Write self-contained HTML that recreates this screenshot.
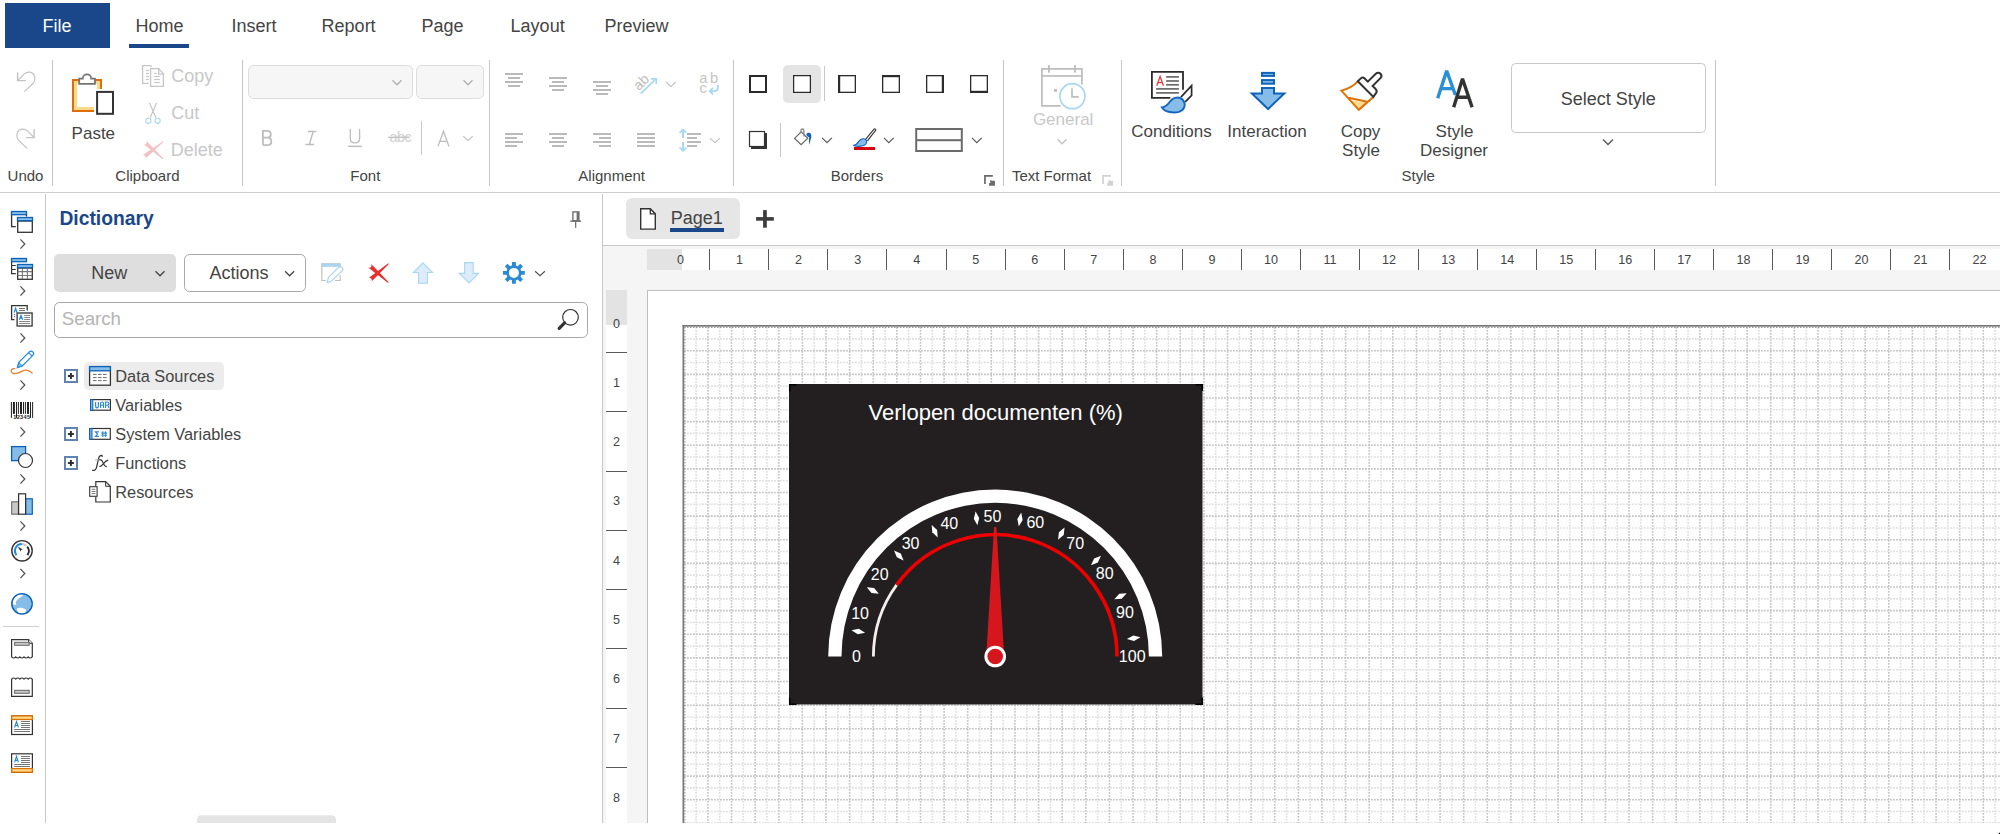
<!DOCTYPE html>
<html><head><meta charset="utf-8"><title>Report Designer</title>
<style>
html,body{margin:0;padding:0;background:#ffffff;width:2000px;height:834px;overflow:hidden}
svg{position:absolute;left:0;top:0;display:block}
svg{font-family:"Liberation Sans", sans-serif} text{white-space:pre}
</style></head><body>
<svg width="2000" height="834" viewBox="0 0 2000 834">
<rect x="603" y="246" width="1397" height="577" fill="#f5f5f5" rx="0" />
<rect x="647" y="249" width="1353" height="21" fill="#ffffff" rx="0" />
<rect x="647" y="249" width="35" height="21" fill="#e3e3e3" rx="0" />
<rect x="606" y="290" width="21" height="533" fill="#ffffff" rx="0" />
<rect x="606" y="290" width="21" height="35" fill="#e3e3e3" rx="0" />
<rect x="647" y="290" width="1353" height="533" fill="#ffffff" rx="0" />
<rect x="647" y="290" width="1353" height="1" fill="#bdbdbd" rx="0" />
<rect x="647" y="290" width="1" height="533" fill="#bdbdbd" rx="0" />
<g><line x1="696.11" y1="327" x2="696.11" y2="823" stroke="#dfdfdf" stroke-width="1.6" stroke-dasharray="1.8 1.2"/><line x1="707.92" y1="327" x2="707.92" y2="823" stroke="#c4c4c4" stroke-width="1.6" stroke-dasharray="1.8 1.2"/><line x1="719.73" y1="327" x2="719.73" y2="823" stroke="#dfdfdf" stroke-width="1.6" stroke-dasharray="1.8 1.2"/><line x1="731.54" y1="327" x2="731.54" y2="823" stroke="#c4c4c4" stroke-width="1.6" stroke-dasharray="1.8 1.2"/><line x1="743.34" y1="327" x2="743.34" y2="823" stroke="#dfdfdf" stroke-width="1.6" stroke-dasharray="1.8 1.2"/><line x1="755.15" y1="327" x2="755.15" y2="823" stroke="#c4c4c4" stroke-width="1.6" stroke-dasharray="1.8 1.2"/><line x1="766.96" y1="327" x2="766.96" y2="823" stroke="#dfdfdf" stroke-width="1.6" stroke-dasharray="1.8 1.2"/><line x1="778.77" y1="327" x2="778.77" y2="823" stroke="#c4c4c4" stroke-width="1.6" stroke-dasharray="1.8 1.2"/><line x1="790.58" y1="327" x2="790.58" y2="823" stroke="#dfdfdf" stroke-width="1.6" stroke-dasharray="1.8 1.2"/><line x1="802.39" y1="327" x2="802.39" y2="823" stroke="#c4c4c4" stroke-width="1.6" stroke-dasharray="1.8 1.2"/><line x1="814.20" y1="327" x2="814.20" y2="823" stroke="#dfdfdf" stroke-width="1.6" stroke-dasharray="1.8 1.2"/><line x1="826.01" y1="327" x2="826.01" y2="823" stroke="#c4c4c4" stroke-width="1.6" stroke-dasharray="1.8 1.2"/><line x1="837.82" y1="327" x2="837.82" y2="823" stroke="#dfdfdf" stroke-width="1.6" stroke-dasharray="1.8 1.2"/><line x1="849.63" y1="327" x2="849.63" y2="823" stroke="#c4c4c4" stroke-width="1.6" stroke-dasharray="1.8 1.2"/><line x1="861.43" y1="327" x2="861.43" y2="823" stroke="#dfdfdf" stroke-width="1.6" stroke-dasharray="1.8 1.2"/><line x1="873.24" y1="327" x2="873.24" y2="823" stroke="#c4c4c4" stroke-width="1.6" stroke-dasharray="1.8 1.2"/><line x1="885.05" y1="327" x2="885.05" y2="823" stroke="#dfdfdf" stroke-width="1.6" stroke-dasharray="1.8 1.2"/><line x1="896.86" y1="327" x2="896.86" y2="823" stroke="#c4c4c4" stroke-width="1.6" stroke-dasharray="1.8 1.2"/><line x1="908.67" y1="327" x2="908.67" y2="823" stroke="#dfdfdf" stroke-width="1.6" stroke-dasharray="1.8 1.2"/><line x1="920.48" y1="327" x2="920.48" y2="823" stroke="#c4c4c4" stroke-width="1.6" stroke-dasharray="1.8 1.2"/><line x1="932.29" y1="327" x2="932.29" y2="823" stroke="#dfdfdf" stroke-width="1.6" stroke-dasharray="1.8 1.2"/><line x1="944.10" y1="327" x2="944.10" y2="823" stroke="#c4c4c4" stroke-width="1.6" stroke-dasharray="1.8 1.2"/><line x1="955.91" y1="327" x2="955.91" y2="823" stroke="#dfdfdf" stroke-width="1.6" stroke-dasharray="1.8 1.2"/><line x1="967.72" y1="327" x2="967.72" y2="823" stroke="#c4c4c4" stroke-width="1.6" stroke-dasharray="1.8 1.2"/><line x1="979.52" y1="327" x2="979.52" y2="823" stroke="#dfdfdf" stroke-width="1.6" stroke-dasharray="1.8 1.2"/><line x1="991.33" y1="327" x2="991.33" y2="823" stroke="#c4c4c4" stroke-width="1.6" stroke-dasharray="1.8 1.2"/><line x1="1003.14" y1="327" x2="1003.14" y2="823" stroke="#dfdfdf" stroke-width="1.6" stroke-dasharray="1.8 1.2"/><line x1="1014.95" y1="327" x2="1014.95" y2="823" stroke="#c4c4c4" stroke-width="1.6" stroke-dasharray="1.8 1.2"/><line x1="1026.76" y1="327" x2="1026.76" y2="823" stroke="#dfdfdf" stroke-width="1.6" stroke-dasharray="1.8 1.2"/><line x1="1038.57" y1="327" x2="1038.57" y2="823" stroke="#c4c4c4" stroke-width="1.6" stroke-dasharray="1.8 1.2"/><line x1="1050.38" y1="327" x2="1050.38" y2="823" stroke="#dfdfdf" stroke-width="1.6" stroke-dasharray="1.8 1.2"/><line x1="1062.19" y1="327" x2="1062.19" y2="823" stroke="#c4c4c4" stroke-width="1.6" stroke-dasharray="1.8 1.2"/><line x1="1074.00" y1="327" x2="1074.00" y2="823" stroke="#dfdfdf" stroke-width="1.6" stroke-dasharray="1.8 1.2"/><line x1="1085.81" y1="327" x2="1085.81" y2="823" stroke="#c4c4c4" stroke-width="1.6" stroke-dasharray="1.8 1.2"/><line x1="1097.62" y1="327" x2="1097.62" y2="823" stroke="#dfdfdf" stroke-width="1.6" stroke-dasharray="1.8 1.2"/><line x1="1109.42" y1="327" x2="1109.42" y2="823" stroke="#c4c4c4" stroke-width="1.6" stroke-dasharray="1.8 1.2"/><line x1="1121.23" y1="327" x2="1121.23" y2="823" stroke="#dfdfdf" stroke-width="1.6" stroke-dasharray="1.8 1.2"/><line x1="1133.04" y1="327" x2="1133.04" y2="823" stroke="#c4c4c4" stroke-width="1.6" stroke-dasharray="1.8 1.2"/><line x1="1144.85" y1="327" x2="1144.85" y2="823" stroke="#dfdfdf" stroke-width="1.6" stroke-dasharray="1.8 1.2"/><line x1="1156.66" y1="327" x2="1156.66" y2="823" stroke="#c4c4c4" stroke-width="1.6" stroke-dasharray="1.8 1.2"/><line x1="1168.47" y1="327" x2="1168.47" y2="823" stroke="#dfdfdf" stroke-width="1.6" stroke-dasharray="1.8 1.2"/><line x1="1180.28" y1="327" x2="1180.28" y2="823" stroke="#c4c4c4" stroke-width="1.6" stroke-dasharray="1.8 1.2"/><line x1="1192.09" y1="327" x2="1192.09" y2="823" stroke="#dfdfdf" stroke-width="1.6" stroke-dasharray="1.8 1.2"/><line x1="1203.90" y1="327" x2="1203.90" y2="823" stroke="#c4c4c4" stroke-width="1.6" stroke-dasharray="1.8 1.2"/><line x1="1215.70" y1="327" x2="1215.70" y2="823" stroke="#dfdfdf" stroke-width="1.6" stroke-dasharray="1.8 1.2"/><line x1="1227.51" y1="327" x2="1227.51" y2="823" stroke="#c4c4c4" stroke-width="1.6" stroke-dasharray="1.8 1.2"/><line x1="1239.32" y1="327" x2="1239.32" y2="823" stroke="#dfdfdf" stroke-width="1.6" stroke-dasharray="1.8 1.2"/><line x1="1251.13" y1="327" x2="1251.13" y2="823" stroke="#c4c4c4" stroke-width="1.6" stroke-dasharray="1.8 1.2"/><line x1="1262.94" y1="327" x2="1262.94" y2="823" stroke="#dfdfdf" stroke-width="1.6" stroke-dasharray="1.8 1.2"/><line x1="1274.75" y1="327" x2="1274.75" y2="823" stroke="#c4c4c4" stroke-width="1.6" stroke-dasharray="1.8 1.2"/><line x1="1286.56" y1="327" x2="1286.56" y2="823" stroke="#dfdfdf" stroke-width="1.6" stroke-dasharray="1.8 1.2"/><line x1="1298.37" y1="327" x2="1298.37" y2="823" stroke="#c4c4c4" stroke-width="1.6" stroke-dasharray="1.8 1.2"/><line x1="1310.18" y1="327" x2="1310.18" y2="823" stroke="#dfdfdf" stroke-width="1.6" stroke-dasharray="1.8 1.2"/><line x1="1321.99" y1="327" x2="1321.99" y2="823" stroke="#c4c4c4" stroke-width="1.6" stroke-dasharray="1.8 1.2"/><line x1="1333.80" y1="327" x2="1333.80" y2="823" stroke="#dfdfdf" stroke-width="1.6" stroke-dasharray="1.8 1.2"/><line x1="1345.60" y1="327" x2="1345.60" y2="823" stroke="#c4c4c4" stroke-width="1.6" stroke-dasharray="1.8 1.2"/><line x1="1357.41" y1="327" x2="1357.41" y2="823" stroke="#dfdfdf" stroke-width="1.6" stroke-dasharray="1.8 1.2"/><line x1="1369.22" y1="327" x2="1369.22" y2="823" stroke="#c4c4c4" stroke-width="1.6" stroke-dasharray="1.8 1.2"/><line x1="1381.03" y1="327" x2="1381.03" y2="823" stroke="#dfdfdf" stroke-width="1.6" stroke-dasharray="1.8 1.2"/><line x1="1392.84" y1="327" x2="1392.84" y2="823" stroke="#c4c4c4" stroke-width="1.6" stroke-dasharray="1.8 1.2"/><line x1="1404.65" y1="327" x2="1404.65" y2="823" stroke="#dfdfdf" stroke-width="1.6" stroke-dasharray="1.8 1.2"/><line x1="1416.46" y1="327" x2="1416.46" y2="823" stroke="#c4c4c4" stroke-width="1.6" stroke-dasharray="1.8 1.2"/><line x1="1428.27" y1="327" x2="1428.27" y2="823" stroke="#dfdfdf" stroke-width="1.6" stroke-dasharray="1.8 1.2"/><line x1="1440.08" y1="327" x2="1440.08" y2="823" stroke="#c4c4c4" stroke-width="1.6" stroke-dasharray="1.8 1.2"/><line x1="1451.88" y1="327" x2="1451.88" y2="823" stroke="#dfdfdf" stroke-width="1.6" stroke-dasharray="1.8 1.2"/><line x1="1463.69" y1="327" x2="1463.69" y2="823" stroke="#c4c4c4" stroke-width="1.6" stroke-dasharray="1.8 1.2"/><line x1="1475.50" y1="327" x2="1475.50" y2="823" stroke="#dfdfdf" stroke-width="1.6" stroke-dasharray="1.8 1.2"/><line x1="1487.31" y1="327" x2="1487.31" y2="823" stroke="#c4c4c4" stroke-width="1.6" stroke-dasharray="1.8 1.2"/><line x1="1499.12" y1="327" x2="1499.12" y2="823" stroke="#dfdfdf" stroke-width="1.6" stroke-dasharray="1.8 1.2"/><line x1="1510.93" y1="327" x2="1510.93" y2="823" stroke="#c4c4c4" stroke-width="1.6" stroke-dasharray="1.8 1.2"/><line x1="1522.74" y1="327" x2="1522.74" y2="823" stroke="#dfdfdf" stroke-width="1.6" stroke-dasharray="1.8 1.2"/><line x1="1534.55" y1="327" x2="1534.55" y2="823" stroke="#c4c4c4" stroke-width="1.6" stroke-dasharray="1.8 1.2"/><line x1="1546.36" y1="327" x2="1546.36" y2="823" stroke="#dfdfdf" stroke-width="1.6" stroke-dasharray="1.8 1.2"/><line x1="1558.17" y1="327" x2="1558.17" y2="823" stroke="#c4c4c4" stroke-width="1.6" stroke-dasharray="1.8 1.2"/><line x1="1569.97" y1="327" x2="1569.97" y2="823" stroke="#dfdfdf" stroke-width="1.6" stroke-dasharray="1.8 1.2"/><line x1="1581.78" y1="327" x2="1581.78" y2="823" stroke="#c4c4c4" stroke-width="1.6" stroke-dasharray="1.8 1.2"/><line x1="1593.59" y1="327" x2="1593.59" y2="823" stroke="#dfdfdf" stroke-width="1.6" stroke-dasharray="1.8 1.2"/><line x1="1605.40" y1="327" x2="1605.40" y2="823" stroke="#c4c4c4" stroke-width="1.6" stroke-dasharray="1.8 1.2"/><line x1="1617.21" y1="327" x2="1617.21" y2="823" stroke="#dfdfdf" stroke-width="1.6" stroke-dasharray="1.8 1.2"/><line x1="1629.02" y1="327" x2="1629.02" y2="823" stroke="#c4c4c4" stroke-width="1.6" stroke-dasharray="1.8 1.2"/><line x1="1640.83" y1="327" x2="1640.83" y2="823" stroke="#dfdfdf" stroke-width="1.6" stroke-dasharray="1.8 1.2"/><line x1="1652.64" y1="327" x2="1652.64" y2="823" stroke="#c4c4c4" stroke-width="1.6" stroke-dasharray="1.8 1.2"/><line x1="1664.45" y1="327" x2="1664.45" y2="823" stroke="#dfdfdf" stroke-width="1.6" stroke-dasharray="1.8 1.2"/><line x1="1676.26" y1="327" x2="1676.26" y2="823" stroke="#c4c4c4" stroke-width="1.6" stroke-dasharray="1.8 1.2"/><line x1="1688.07" y1="327" x2="1688.07" y2="823" stroke="#dfdfdf" stroke-width="1.6" stroke-dasharray="1.8 1.2"/><line x1="1699.87" y1="327" x2="1699.87" y2="823" stroke="#c4c4c4" stroke-width="1.6" stroke-dasharray="1.8 1.2"/><line x1="1711.68" y1="327" x2="1711.68" y2="823" stroke="#dfdfdf" stroke-width="1.6" stroke-dasharray="1.8 1.2"/><line x1="1723.49" y1="327" x2="1723.49" y2="823" stroke="#c4c4c4" stroke-width="1.6" stroke-dasharray="1.8 1.2"/><line x1="1735.30" y1="327" x2="1735.30" y2="823" stroke="#dfdfdf" stroke-width="1.6" stroke-dasharray="1.8 1.2"/><line x1="1747.11" y1="327" x2="1747.11" y2="823" stroke="#c4c4c4" stroke-width="1.6" stroke-dasharray="1.8 1.2"/><line x1="1758.92" y1="327" x2="1758.92" y2="823" stroke="#dfdfdf" stroke-width="1.6" stroke-dasharray="1.8 1.2"/><line x1="1770.73" y1="327" x2="1770.73" y2="823" stroke="#c4c4c4" stroke-width="1.6" stroke-dasharray="1.8 1.2"/><line x1="1782.54" y1="327" x2="1782.54" y2="823" stroke="#dfdfdf" stroke-width="1.6" stroke-dasharray="1.8 1.2"/><line x1="1794.35" y1="327" x2="1794.35" y2="823" stroke="#c4c4c4" stroke-width="1.6" stroke-dasharray="1.8 1.2"/><line x1="1806.15" y1="327" x2="1806.15" y2="823" stroke="#dfdfdf" stroke-width="1.6" stroke-dasharray="1.8 1.2"/><line x1="1817.96" y1="327" x2="1817.96" y2="823" stroke="#c4c4c4" stroke-width="1.6" stroke-dasharray="1.8 1.2"/><line x1="1829.77" y1="327" x2="1829.77" y2="823" stroke="#dfdfdf" stroke-width="1.6" stroke-dasharray="1.8 1.2"/><line x1="1841.58" y1="327" x2="1841.58" y2="823" stroke="#c4c4c4" stroke-width="1.6" stroke-dasharray="1.8 1.2"/><line x1="1853.39" y1="327" x2="1853.39" y2="823" stroke="#dfdfdf" stroke-width="1.6" stroke-dasharray="1.8 1.2"/><line x1="1865.20" y1="327" x2="1865.20" y2="823" stroke="#c4c4c4" stroke-width="1.6" stroke-dasharray="1.8 1.2"/><line x1="1877.01" y1="327" x2="1877.01" y2="823" stroke="#dfdfdf" stroke-width="1.6" stroke-dasharray="1.8 1.2"/><line x1="1888.82" y1="327" x2="1888.82" y2="823" stroke="#c4c4c4" stroke-width="1.6" stroke-dasharray="1.8 1.2"/><line x1="1900.63" y1="327" x2="1900.63" y2="823" stroke="#dfdfdf" stroke-width="1.6" stroke-dasharray="1.8 1.2"/><line x1="1912.44" y1="327" x2="1912.44" y2="823" stroke="#c4c4c4" stroke-width="1.6" stroke-dasharray="1.8 1.2"/><line x1="1924.24" y1="327" x2="1924.24" y2="823" stroke="#dfdfdf" stroke-width="1.6" stroke-dasharray="1.8 1.2"/><line x1="1936.05" y1="327" x2="1936.05" y2="823" stroke="#c4c4c4" stroke-width="1.6" stroke-dasharray="1.8 1.2"/><line x1="1947.86" y1="327" x2="1947.86" y2="823" stroke="#dfdfdf" stroke-width="1.6" stroke-dasharray="1.8 1.2"/><line x1="1959.67" y1="327" x2="1959.67" y2="823" stroke="#c4c4c4" stroke-width="1.6" stroke-dasharray="1.8 1.2"/><line x1="1971.48" y1="327" x2="1971.48" y2="823" stroke="#dfdfdf" stroke-width="1.6" stroke-dasharray="1.8 1.2"/><line x1="1983.29" y1="327" x2="1983.29" y2="823" stroke="#c4c4c4" stroke-width="1.6" stroke-dasharray="1.8 1.2"/><line x1="1995.10" y1="327" x2="1995.10" y2="823" stroke="#dfdfdf" stroke-width="1.6" stroke-dasharray="1.8 1.2"/><line x1="684" y1="338.89" x2="2000" y2="338.89" stroke="#dfdfdf" stroke-width="1.6" stroke-dasharray="1.8 1.2"/><line x1="684" y1="350.70" x2="2000" y2="350.70" stroke="#c4c4c4" stroke-width="1.6" stroke-dasharray="1.8 1.2"/><line x1="684" y1="362.52" x2="2000" y2="362.52" stroke="#dfdfdf" stroke-width="1.6" stroke-dasharray="1.8 1.2"/><line x1="684" y1="374.33" x2="2000" y2="374.33" stroke="#c4c4c4" stroke-width="1.6" stroke-dasharray="1.8 1.2"/><line x1="684" y1="386.15" x2="2000" y2="386.15" stroke="#dfdfdf" stroke-width="1.6" stroke-dasharray="1.8 1.2"/><line x1="684" y1="397.97" x2="2000" y2="397.97" stroke="#c4c4c4" stroke-width="1.6" stroke-dasharray="1.8 1.2"/><line x1="684" y1="409.78" x2="2000" y2="409.78" stroke="#dfdfdf" stroke-width="1.6" stroke-dasharray="1.8 1.2"/><line x1="684" y1="421.60" x2="2000" y2="421.60" stroke="#c4c4c4" stroke-width="1.6" stroke-dasharray="1.8 1.2"/><line x1="684" y1="433.41" x2="2000" y2="433.41" stroke="#dfdfdf" stroke-width="1.6" stroke-dasharray="1.8 1.2"/><line x1="684" y1="445.23" x2="2000" y2="445.23" stroke="#c4c4c4" stroke-width="1.6" stroke-dasharray="1.8 1.2"/><line x1="684" y1="457.05" x2="2000" y2="457.05" stroke="#dfdfdf" stroke-width="1.6" stroke-dasharray="1.8 1.2"/><line x1="684" y1="468.86" x2="2000" y2="468.86" stroke="#c4c4c4" stroke-width="1.6" stroke-dasharray="1.8 1.2"/><line x1="684" y1="480.68" x2="2000" y2="480.68" stroke="#dfdfdf" stroke-width="1.6" stroke-dasharray="1.8 1.2"/><line x1="684" y1="492.49" x2="2000" y2="492.49" stroke="#c4c4c4" stroke-width="1.6" stroke-dasharray="1.8 1.2"/><line x1="684" y1="504.31" x2="2000" y2="504.31" stroke="#dfdfdf" stroke-width="1.6" stroke-dasharray="1.8 1.2"/><line x1="684" y1="516.13" x2="2000" y2="516.13" stroke="#c4c4c4" stroke-width="1.6" stroke-dasharray="1.8 1.2"/><line x1="684" y1="527.94" x2="2000" y2="527.94" stroke="#dfdfdf" stroke-width="1.6" stroke-dasharray="1.8 1.2"/><line x1="684" y1="539.76" x2="2000" y2="539.76" stroke="#c4c4c4" stroke-width="1.6" stroke-dasharray="1.8 1.2"/><line x1="684" y1="551.57" x2="2000" y2="551.57" stroke="#dfdfdf" stroke-width="1.6" stroke-dasharray="1.8 1.2"/><line x1="684" y1="563.39" x2="2000" y2="563.39" stroke="#c4c4c4" stroke-width="1.6" stroke-dasharray="1.8 1.2"/><line x1="684" y1="575.21" x2="2000" y2="575.21" stroke="#dfdfdf" stroke-width="1.6" stroke-dasharray="1.8 1.2"/><line x1="684" y1="587.02" x2="2000" y2="587.02" stroke="#c4c4c4" stroke-width="1.6" stroke-dasharray="1.8 1.2"/><line x1="684" y1="598.84" x2="2000" y2="598.84" stroke="#dfdfdf" stroke-width="1.6" stroke-dasharray="1.8 1.2"/><line x1="684" y1="610.65" x2="2000" y2="610.65" stroke="#c4c4c4" stroke-width="1.6" stroke-dasharray="1.8 1.2"/><line x1="684" y1="622.47" x2="2000" y2="622.47" stroke="#dfdfdf" stroke-width="1.6" stroke-dasharray="1.8 1.2"/><line x1="684" y1="634.29" x2="2000" y2="634.29" stroke="#c4c4c4" stroke-width="1.6" stroke-dasharray="1.8 1.2"/><line x1="684" y1="646.10" x2="2000" y2="646.10" stroke="#dfdfdf" stroke-width="1.6" stroke-dasharray="1.8 1.2"/><line x1="684" y1="657.92" x2="2000" y2="657.92" stroke="#c4c4c4" stroke-width="1.6" stroke-dasharray="1.8 1.2"/><line x1="684" y1="669.73" x2="2000" y2="669.73" stroke="#dfdfdf" stroke-width="1.6" stroke-dasharray="1.8 1.2"/><line x1="684" y1="681.55" x2="2000" y2="681.55" stroke="#c4c4c4" stroke-width="1.6" stroke-dasharray="1.8 1.2"/><line x1="684" y1="693.37" x2="2000" y2="693.37" stroke="#dfdfdf" stroke-width="1.6" stroke-dasharray="1.8 1.2"/><line x1="684" y1="705.18" x2="2000" y2="705.18" stroke="#c4c4c4" stroke-width="1.6" stroke-dasharray="1.8 1.2"/><line x1="684" y1="717.00" x2="2000" y2="717.00" stroke="#dfdfdf" stroke-width="1.6" stroke-dasharray="1.8 1.2"/><line x1="684" y1="728.81" x2="2000" y2="728.81" stroke="#c4c4c4" stroke-width="1.6" stroke-dasharray="1.8 1.2"/><line x1="684" y1="740.63" x2="2000" y2="740.63" stroke="#dfdfdf" stroke-width="1.6" stroke-dasharray="1.8 1.2"/><line x1="684" y1="752.45" x2="2000" y2="752.45" stroke="#c4c4c4" stroke-width="1.6" stroke-dasharray="1.8 1.2"/><line x1="684" y1="764.26" x2="2000" y2="764.26" stroke="#dfdfdf" stroke-width="1.6" stroke-dasharray="1.8 1.2"/><line x1="684" y1="776.08" x2="2000" y2="776.08" stroke="#c4c4c4" stroke-width="1.6" stroke-dasharray="1.8 1.2"/><line x1="684" y1="787.89" x2="2000" y2="787.89" stroke="#dfdfdf" stroke-width="1.6" stroke-dasharray="1.8 1.2"/><line x1="684" y1="799.71" x2="2000" y2="799.71" stroke="#c4c4c4" stroke-width="1.6" stroke-dasharray="1.8 1.2"/><line x1="684" y1="811.53" x2="2000" y2="811.53" stroke="#dfdfdf" stroke-width="1.6" stroke-dasharray="1.8 1.2"/><line x1="684" y1="823.34" x2="2000" y2="823.34" stroke="#c4c4c4" stroke-width="1.6" stroke-dasharray="1.8 1.2"/></g>
<rect x="682.5" y="325" width="1317.5" height="1.7" fill="#787878" rx="0" />
<rect x="682.5" y="325" width="1.7" height="498" fill="#787878" rx="0" />
<line x1="684" y1="327.4" x2="2000" y2="327.4" stroke="#9a9a9a" stroke-width="1.1" stroke-dasharray="1.5 1.5"/>
<line x1="684.9" y1="327" x2="684.9" y2="823" stroke="#9a9a9a" stroke-width="1.1" stroke-dasharray="1.5 1.5"/>
<rect x="0" y="823" width="2000" height="11" fill="#ffffff" rx="0" />
<rect x="5" y="3" width="105" height="45" fill="#19478a" rx="0" />
<text x="42.6" y="32" font-size="18" fill="#ffffff" text-anchor="start" font-weight="normal" >File</text>
<text x="135.6" y="32" font-size="18" fill="#444444" text-anchor="start" font-weight="normal" >Home</text>
<text x="231.4" y="32" font-size="18" fill="#444444" text-anchor="start" font-weight="normal" >Insert</text>
<text x="321.6" y="32" font-size="18" fill="#444444" text-anchor="start" font-weight="normal" >Report</text>
<text x="421.6" y="32" font-size="18" fill="#444444" text-anchor="start" font-weight="normal" >Page</text>
<text x="510.6" y="32" font-size="18" fill="#444444" text-anchor="start" font-weight="normal" >Layout</text>
<text x="604.6" y="32" font-size="18" fill="#444444" text-anchor="start" font-weight="normal" >Preview</text>
<rect x="129" y="44" width="60" height="4" fill="#19478a" rx="0" />
<rect x="0" y="192" width="2000" height="1" fill="#cfcfcf" rx="0" />
<rect x="52" y="60" width="1" height="126" fill="#c6c6c6" rx="0" />
<rect x="242" y="60" width="1" height="126" fill="#c6c6c6" rx="0" />
<rect x="489" y="60" width="1" height="126" fill="#c6c6c6" rx="0" />
<rect x="733" y="60" width="1" height="126" fill="#c6c6c6" rx="0" />
<rect x="1003" y="60" width="1" height="126" fill="#c6c6c6" rx="0" />
<rect x="1121" y="60" width="1" height="126" fill="#c6c6c6" rx="0" />
<rect x="1715" y="60" width="1" height="126" fill="#c6c6c6" rx="0" />
<text x="7.6" y="180.5" font-size="15" fill="#444444" text-anchor="start" font-weight="normal" >Undo</text>
<text x="115.3" y="180.5" font-size="15" fill="#444444" text-anchor="start" font-weight="normal" >Clipboard</text>
<text x="350.3" y="180.5" font-size="15" fill="#444444" text-anchor="start" font-weight="normal" >Font</text>
<text x="578.3" y="180.5" font-size="15" fill="#444444" text-anchor="start" font-weight="normal" >Alignment</text>
<text x="830.7" y="180.5" font-size="15" fill="#444444" text-anchor="start" font-weight="normal" >Borders</text>
<text x="1011.9" y="180.5" font-size="15" fill="#444444" text-anchor="start" font-weight="normal" >Text Format</text>
<text x="1401.5" y="180.5" font-size="15" fill="#444444" text-anchor="start" font-weight="normal" >Style</text>
<text x="71.6" y="138.8" font-size="17" fill="#444444" text-anchor="start" font-weight="normal" >Paste</text>
<text x="171.3" y="81.8" font-size="18" fill="#c8c8c8" text-anchor="start" font-weight="normal" >Copy</text>
<text x="171.3" y="118.5" font-size="18" fill="#c8c8c8" text-anchor="start" font-weight="normal" >Cut</text>
<text x="170.7" y="155.8" font-size="18" fill="#c8c8c8" text-anchor="start" font-weight="normal" >Delete</text>
<rect x="248.5" y="65.5" width="164" height="33" fill="#f6f6f6" stroke="#dcdcdc" stroke-width="1" rx="5" />
<path d="M392.5 80.25 L397 84.75 L401.5 80.25" fill="none" stroke="#b0b0b0" stroke-width="1.3" />
<rect x="416.5" y="65.5" width="67" height="33" fill="#f6f6f6" stroke="#dcdcdc" stroke-width="1" rx="5" />
<path d="M463.5 80.25 L468 84.75 L472.5 80.25" fill="none" stroke="#b0b0b0" stroke-width="1.3" />
<text x="1032.9" y="125.2" font-size="17" fill="#c8c8c8" text-anchor="start" font-weight="normal" >General</text>
<path d="M1057.5 139.25 L1062 143.75 L1066.5 139.25" fill="none" stroke="#c0c0c0" stroke-width="1.3" />
<text x="1171.5" y="136.7" font-size="17" fill="#444444" text-anchor="middle" font-weight="normal" >Conditions</text>
<text x="1267" y="136.7" font-size="17" fill="#444444" text-anchor="middle" font-weight="normal" >Interaction</text>
<text x="1360.5" y="136.7" font-size="17" fill="#444444" text-anchor="middle" font-weight="normal" >Copy</text>
<text x="1361" y="155.5" font-size="17" fill="#444444" text-anchor="middle" font-weight="normal" >Style</text>
<text x="1454.5" y="136.7" font-size="17" fill="#444444" text-anchor="middle" font-weight="normal" >Style</text>
<text x="1454" y="155.5" font-size="17" fill="#444444" text-anchor="middle" font-weight="normal" >Designer</text>
<rect x="1511.5" y="63.5" width="194" height="69" fill="#ffffff" stroke="#c8c8c8" stroke-width="1" rx="4" />
<text x="1608.2" y="104.8" font-size="18" fill="#444444" text-anchor="middle" font-weight="normal" >Select Style</text>
<path d="M1603.0 139.5 L1608 144.5 L1613.0 139.5" fill="none" stroke="#555" stroke-width="1.3" />
<rect x="45" y="194" width="1" height="629" fill="#c8c8c8" rx="0" />
<rect x="3" y="626" width="36" height="1" fill="#d0d0d0" rx="0" />
<rect x="602" y="194" width="1" height="629" fill="#c8c8c8" rx="0" />
<text x="59.45" y="225.2" font-size="19.3" fill="#19478a" text-anchor="start" font-weight="bold" >Dictionary</text>
<rect x="54" y="254" width="122" height="38" fill="#dedede" rx="5" />
<text x="109.2" y="278.6" font-size="18" fill="#444444" text-anchor="middle" font-weight="normal" >New</text>
<path d="M155.5 271.25 L160 275.75 L164.5 271.25" fill="none" stroke="#444" stroke-width="1.3" />
<rect x="184.5" y="254.5" width="121" height="37" fill="#ffffff" stroke="#a8a8a8" stroke-width="1" rx="5" />
<text x="239.1" y="278.6" font-size="18" fill="#444444" text-anchor="middle" font-weight="normal" >Actions</text>
<path d="M285.1 271.25 L289.6 275.75 L294.1 271.25" fill="none" stroke="#444" stroke-width="1.3" />
<rect x="54.5" y="302.5" width="533" height="35" fill="#ffffff" stroke="#a8a8a8" stroke-width="1" rx="5" />
<text x="61.8" y="324.9" font-size="18.7" fill="#b4b4b4" text-anchor="start" font-weight="normal" >Search</text>
<rect x="84" y="362" width="140" height="28" fill="#ececec" rx="5" />
<text x="115.3" y="382.2" font-size="16.35" fill="#444444" text-anchor="start" font-weight="normal" >Data Sources</text>
<text x="115.3" y="411.4" font-size="16.35" fill="#444444" text-anchor="start" font-weight="normal" >Variables</text>
<text x="115.3" y="440.2" font-size="16.35" fill="#444444" text-anchor="start" font-weight="normal" >System Variables</text>
<text x="115.3" y="469" font-size="16.35" fill="#444444" text-anchor="start" font-weight="normal" >Functions</text>
<text x="115.3" y="497.8" font-size="16.35" fill="#444444" text-anchor="start" font-weight="normal" >Resources</text>
<path d="M197 823 V819.5 Q197 815.2 201.5 815.2 H331.5 Q336 815.2 336 819.5 V823 Z" fill="#e4e4e4" />
<rect x="626" y="198" width="114" height="41" fill="#e6e6e6" rx="6" />
<text x="670.8" y="224" font-size="18" fill="#444444" text-anchor="start" font-weight="normal" >Page1</text>
<rect x="670" y="228" width="54" height="4" fill="#19478a" rx="0" />
<rect x="603" y="245" width="1397" height="1" fill="#c8c8c8" rx="0" />
<text x="680.5" y="264" font-size="12.6" fill="#444" text-anchor="middle" font-weight="normal" >0</text>
<rect x="709" y="249" width="1" height="21" fill="#5a5a5a" rx="0" />
<text x="739.55" y="264" font-size="12.6" fill="#444" text-anchor="middle" font-weight="normal" >1</text>
<rect x="768" y="249" width="1" height="21" fill="#5a5a5a" rx="0" />
<text x="798.6" y="264" font-size="12.6" fill="#444" text-anchor="middle" font-weight="normal" >2</text>
<rect x="827" y="249" width="1" height="21" fill="#5a5a5a" rx="0" />
<text x="857.65" y="264" font-size="12.6" fill="#444" text-anchor="middle" font-weight="normal" >3</text>
<rect x="886" y="249" width="1" height="21" fill="#5a5a5a" rx="0" />
<text x="916.7" y="264" font-size="12.6" fill="#444" text-anchor="middle" font-weight="normal" >4</text>
<rect x="946" y="249" width="1" height="21" fill="#5a5a5a" rx="0" />
<text x="975.75" y="264" font-size="12.6" fill="#444" text-anchor="middle" font-weight="normal" >5</text>
<rect x="1005" y="249" width="1" height="21" fill="#5a5a5a" rx="0" />
<text x="1034.8" y="264" font-size="12.6" fill="#444" text-anchor="middle" font-weight="normal" >6</text>
<rect x="1064" y="249" width="1" height="21" fill="#5a5a5a" rx="0" />
<text x="1093.85" y="264" font-size="12.6" fill="#444" text-anchor="middle" font-weight="normal" >7</text>
<rect x="1123" y="249" width="1" height="21" fill="#5a5a5a" rx="0" />
<text x="1152.9" y="264" font-size="12.6" fill="#444" text-anchor="middle" font-weight="normal" >8</text>
<rect x="1182" y="249" width="1" height="21" fill="#5a5a5a" rx="0" />
<text x="1211.95" y="264" font-size="12.6" fill="#444" text-anchor="middle" font-weight="normal" >9</text>
<rect x="1241" y="249" width="1" height="21" fill="#5a5a5a" rx="0" />
<text x="1271.0" y="264" font-size="12.6" fill="#444" text-anchor="middle" font-weight="normal" >10</text>
<rect x="1300" y="249" width="1" height="21" fill="#5a5a5a" rx="0" />
<text x="1330.05" y="264" font-size="12.6" fill="#444" text-anchor="middle" font-weight="normal" >11</text>
<rect x="1359" y="249" width="1" height="21" fill="#5a5a5a" rx="0" />
<text x="1389.1" y="264" font-size="12.6" fill="#444" text-anchor="middle" font-weight="normal" >12</text>
<rect x="1418" y="249" width="1" height="21" fill="#5a5a5a" rx="0" />
<text x="1448.15" y="264" font-size="12.6" fill="#444" text-anchor="middle" font-weight="normal" >13</text>
<rect x="1477" y="249" width="1" height="21" fill="#5a5a5a" rx="0" />
<text x="1507.2" y="264" font-size="12.6" fill="#444" text-anchor="middle" font-weight="normal" >14</text>
<rect x="1536" y="249" width="1" height="21" fill="#5a5a5a" rx="0" />
<text x="1566.25" y="264" font-size="12.6" fill="#444" text-anchor="middle" font-weight="normal" >15</text>
<rect x="1595" y="249" width="1" height="21" fill="#5a5a5a" rx="0" />
<text x="1625.3" y="264" font-size="12.6" fill="#444" text-anchor="middle" font-weight="normal" >16</text>
<rect x="1654" y="249" width="1" height="21" fill="#5a5a5a" rx="0" />
<text x="1684.35" y="264" font-size="12.6" fill="#444" text-anchor="middle" font-weight="normal" >17</text>
<rect x="1713" y="249" width="1" height="21" fill="#5a5a5a" rx="0" />
<text x="1743.4" y="264" font-size="12.6" fill="#444" text-anchor="middle" font-weight="normal" >18</text>
<rect x="1772" y="249" width="1" height="21" fill="#5a5a5a" rx="0" />
<text x="1802.45" y="264" font-size="12.6" fill="#444" text-anchor="middle" font-weight="normal" >19</text>
<rect x="1831" y="249" width="1" height="21" fill="#5a5a5a" rx="0" />
<text x="1861.5" y="264" font-size="12.6" fill="#444" text-anchor="middle" font-weight="normal" >20</text>
<rect x="1890" y="249" width="1" height="21" fill="#5a5a5a" rx="0" />
<text x="1920.55" y="264" font-size="12.6" fill="#444" text-anchor="middle" font-weight="normal" >21</text>
<rect x="1949" y="249" width="1" height="21" fill="#5a5a5a" rx="0" />
<text x="1979.6" y="264" font-size="12.6" fill="#444" text-anchor="middle" font-weight="normal" >22</text>
<text x="616.5" y="327.6" font-size="12.6" fill="#444" text-anchor="middle" font-weight="normal" >0</text>
<rect x="606" y="352" width="21" height="1" fill="#5a5a5a" rx="0" />
<text x="616.5" y="386.89" font-size="12.6" fill="#444" text-anchor="middle" font-weight="normal" >1</text>
<rect x="606" y="411" width="21" height="1" fill="#5a5a5a" rx="0" />
<text x="616.5" y="446.18" font-size="12.6" fill="#444" text-anchor="middle" font-weight="normal" >2</text>
<rect x="606" y="471" width="21" height="1" fill="#5a5a5a" rx="0" />
<text x="616.5" y="505.47" font-size="12.6" fill="#444" text-anchor="middle" font-weight="normal" >3</text>
<rect x="606" y="530" width="21" height="1" fill="#5a5a5a" rx="0" />
<text x="616.5" y="564.76" font-size="12.6" fill="#444" text-anchor="middle" font-weight="normal" >4</text>
<rect x="606" y="589" width="21" height="1" fill="#5a5a5a" rx="0" />
<text x="616.5" y="624.05" font-size="12.6" fill="#444" text-anchor="middle" font-weight="normal" >5</text>
<rect x="606" y="648" width="21" height="1" fill="#5a5a5a" rx="0" />
<text x="616.5" y="683.34" font-size="12.6" fill="#444" text-anchor="middle" font-weight="normal" >6</text>
<rect x="606" y="708" width="21" height="1" fill="#5a5a5a" rx="0" />
<text x="616.5" y="742.63" font-size="12.6" fill="#444" text-anchor="middle" font-weight="normal" >7</text>
<rect x="606" y="767" width="21" height="1" fill="#5a5a5a" rx="0" />
<text x="616.5" y="801.92" font-size="12.6" fill="#444" text-anchor="middle" font-weight="normal" >8</text>
<rect x="789" y="384" width="413.5" height="320.5" fill="#231f20" rx="0" />
<path d="M789.7 391.5 V384.7 H796.5 M1195.5 384.7 H1202.3 V391 M1202.3 697.5 V704.2 H1195.5 M796.5 704.2 H789.7 V697.5" fill="none" stroke="#000000" stroke-width="1.5" />
<text x="995.7" y="420" font-size="22" fill="#ffffff" text-anchor="middle" font-weight="normal" >Verlopen documenten (%)</text>
<path d="M828.2 656.5 A167 167 0 0 1 1162.2 656.5 L1148.9 656.5 A153.7 153.7 0 0 0 841.5 656.5 Z" fill="#ffffff" />
<path d="M873.4000000000001 656.5 A121.8 121.8 0 0 1 896.66 584.91" fill="none" stroke="#f6eeee" stroke-width="2.8" />
<path d="M896.66 584.91 A121.8 121.8 0 0 1 1117.0 656.5" fill="none" stroke="#ee0000" stroke-width="3.6" />
<g transform="translate(858.30 631.50) rotate(-169.65)"><path d="M-6.9 0 L0 -2.7 L6.9 0 L0 2.7 Z" fill="#ffffff"/></g>
<g transform="translate(872.80 590.50) rotate(-151.67)"><path d="M-6.9 0 L0 -2.7 L6.9 0 L0 2.7 Z" fill="#ffffff"/></g>
<g transform="translate(898.80 555.40) rotate(-133.64)"><path d="M-6.9 0 L0 -2.7 L6.9 0 L0 2.7 Z" fill="#ffffff"/></g>
<g transform="translate(934.70 531.20) rotate(-115.77)"><path d="M-6.9 0 L0 -2.7 L6.9 0 L0 2.7 Z" fill="#ffffff"/></g>
<g transform="translate(976.50 518.40) rotate(-97.71)"><path d="M-6.9 0 L0 -2.7 L6.9 0 L0 2.7 Z" fill="#ffffff"/></g>
<g transform="translate(1020.00 519.40) rotate(-79.75)"><path d="M-6.9 0 L0 -2.7 L6.9 0 L0 2.7 Z" fill="#ffffff"/></g>
<g transform="translate(1061.30 533.60) rotate(-61.73)"><path d="M-6.9 0 L0 -2.7 L6.9 0 L0 2.7 Z" fill="#ffffff"/></g>
<g transform="translate(1096.00 560.50) rotate(-43.60)"><path d="M-6.9 0 L0 -2.7 L6.9 0 L0 2.7 Z" fill="#ffffff"/></g>
<g transform="translate(1120.50 596.20) rotate(-25.70)"><path d="M-6.9 0 L0 -2.7 L6.9 0 L0 2.7 Z" fill="#ffffff"/></g>
<g transform="translate(1133.70 638.20) rotate(-7.53)"><path d="M-6.9 0 L0 -2.7 L6.9 0 L0 2.7 Z" fill="#ffffff"/></g>
<text x="856.4" y="661.5" font-size="16" fill="#ffffff" text-anchor="middle" font-weight="normal" >0</text>
<text x="860.1" y="618.7" font-size="16" fill="#ffffff" text-anchor="middle" font-weight="normal" >10</text>
<text x="879.7" y="579.7" font-size="16" fill="#ffffff" text-anchor="middle" font-weight="normal" >20</text>
<text x="910.6" y="548.5" font-size="16" fill="#ffffff" text-anchor="middle" font-weight="normal" >30</text>
<text x="949.3" y="528.5" font-size="16" fill="#ffffff" text-anchor="middle" font-weight="normal" >40</text>
<text x="992.4" y="522.4" font-size="16" fill="#ffffff" text-anchor="middle" font-weight="normal" >50</text>
<text x="1035.3" y="528.4" font-size="16" fill="#ffffff" text-anchor="middle" font-weight="normal" >60</text>
<text x="1075.2" y="548.8" font-size="16" fill="#ffffff" text-anchor="middle" font-weight="normal" >70</text>
<text x="1104.7" y="579.4" font-size="16" fill="#ffffff" text-anchor="middle" font-weight="normal" >80</text>
<text x="1124.9" y="618.1" font-size="16" fill="#ffffff" text-anchor="middle" font-weight="normal" >90</text>
<text x="1132.2" y="661.9" font-size="16" fill="#ffffff" text-anchor="middle" font-weight="normal" >100</text>
<path d="M986.2 656.5 L994.0 527 L996.4000000000001 527 L1004.2 656.5 Z" fill="#d5161d" />
<circle cx="995.2" cy="656.5" r="9.3" fill="#d5161d" stroke="#ffffff" stroke-width="3"/>
<path d="M17.6 72.2 V80.6 H26" fill="none" stroke="#c4c4c4" stroke-width="1.4"/><path d="M18.2 80 L24 74.2 C27.5 70.8 32.8 71.5 34.4 75.8 C35.4 78.8 34.4 82 32.4 84 L24.3 91.6" fill="none" stroke="#c4c4c4" stroke-width="1.2"/>
<g transform="translate(51.7 57) scale(-1 1)"><path d="M17.6 72.2 V80.6 H26" fill="none" stroke="#c4c4c4" stroke-width="1.4"/><path d="M18.2 80 L24 74.2 C27.5 70.8 32.8 71.5 34.4 75.8 C35.4 78.8 34.4 82 32.4 84 L24.3 91.6" fill="none" stroke="#c4c4c4" stroke-width="1.2"/></g>
<path d="M94 111 H73 V80 H101 V89" fill="none" stroke="#e36c0a" stroke-width="2" />
<path d="M94 108.5 H75.5 V82.5 H98.5 V89" fill="none" stroke="#f9d98c" stroke-width="3" />
<path d="M79.2 78.6 H82.8 A4.2 4.2 0 0 1 91.2 78.6 H94.9 V83.8 H79.2 Z" fill="#ffffff" stroke="#747474" stroke-width="1.8" />
<rect x="97.1" y="91.9" width="15.9" height="21.9" fill="#ffffff" stroke="#333333" stroke-width="2" rx="0" />
<path d="M148.8 83.4 H142.6 V65.6 H150.6 L151.8 66.6" fill="none" stroke="#c6c6c6" stroke-width="1.3" />
<rect x="146" y="69.9" width="3" height="1.2" fill="#c6c6c6" rx="0" />
<rect x="146" y="72.9" width="3" height="1.2" fill="#c6c6c6" rx="0" />
<rect x="146" y="75.9" width="3" height="1.2" fill="#c6c6c6" rx="0" />
<rect x="146" y="78.9" width="3" height="1.2" fill="#c6c6c6" rx="0" />
<path d="M150.6 68.6 H158.7 L163.4 73.7 V86.4 H150.6 Z" fill="#ffffff" stroke="#c6c6c6" stroke-width="1.3" />
<path d="M158.7 68.6 V74.2 H163.4" fill="none" stroke="#c6c6c6" stroke-width="1.3" />
<rect x="154.2" y="72.9" width="2.6" height="1.2" fill="#c6c6c6" rx="0" />
<rect x="154.2" y="75.9" width="5.6" height="1.2" fill="#c6c6c6" rx="0" />
<rect x="154.2" y="78.9" width="5.6" height="1.2" fill="#c6c6c6" rx="0" />
<rect x="154.2" y="81.9" width="5.6" height="1.2" fill="#c6c6c6" rx="0" />
<path d="M149.5 102.9 L155.8 117.6 M156.5 102.9 L150.2 117.6" fill="none" stroke="#bdbdbd" stroke-width="1.1" />
<circle cx="148.4" cy="120.8" r="2.6" fill="none" stroke="#a9d5f2" stroke-width="1.1"/>
<circle cx="157.6" cy="120.8" r="2.6" fill="none" stroke="#a9d5f2" stroke-width="1.1"/>
<path d="M143.12 143.73 L163.03 159.40 L163.57 158.80 L146.08 140.47 A2.20 2.20 0 0 1 143.12 143.73 Z" fill="#f4c0c4" />
<path d="M144.98 159.01 L163.85 141.51 L163.35 140.89 L142.22 155.59 A2.20 2.20 0 0 1 144.98 159.01 Z" fill="#f4c0c4" />
<path d="M262.9 145.1 V130.9 H267.3 C269.7 130.9 270.8 132.3 270.8 134.5 C270.8 136.6 269.6 137.7 267.3 137.7 H262.9 M267.3 137.7 C270.1 137.7 271.3 139.3 271.3 141.4 C271.3 143.7 270 145.1 267.4 145.1 H262.9" fill="none" stroke="#bdbdbd" stroke-width="1.8" />
<path d="M308 131.5 H316.3 M305.4 144.5 H314.2 M313.1 131.5 L309.4 144.5" fill="none" stroke="#bdbdbd" stroke-width="1.4" />
<path d="M350.3 129 V138.2 C350.3 141.3 352.3 142.9 355 142.9 C357.7 142.9 359.6 141.3 359.6 138.2 V129" fill="none" stroke="#bdbdbd" stroke-width="1.3" />
<rect x="348.2" y="145.6" width="13.6" height="1.5" fill="#bdbdbd" rx="0" />
<text x="389.6" y="141.7" font-size="14.5" fill="#cfcfcf" letter-spacing="-0.6">abc</text>
<rect x="388.2" y="136.6" width="21.6" height="1.4" fill="#c4c4c4" rx="0" />
<rect x="421" y="121" width="1" height="34" fill="#c8c8c8" rx="0" />
<path d="M437.9 146.6 L443.5 131.2 L449 146.6 M439.7 141.4 H447.3" fill="none" stroke="#bdbdbd" stroke-width="1.3" />
<path d="M463.25 136.20000000000002 L468 140.4 L472.75 136.20000000000002" fill="none" stroke="#c4c4c4" stroke-width="1.2" />
<rect x="505" y="73" width="18" height="2" fill="#bababa" rx="0" />
<rect x="508" y="77" width="12" height="2" fill="#bababa" rx="0" />
<rect x="505" y="81" width="18" height="2" fill="#bababa" rx="0" />
<rect x="508" y="85" width="12" height="2" fill="#bababa" rx="0" />
<rect x="549" y="77" width="18" height="2" fill="#bababa" rx="0" />
<rect x="552" y="81" width="12" height="2" fill="#bababa" rx="0" />
<rect x="549" y="85" width="18" height="2" fill="#bababa" rx="0" />
<rect x="552" y="89" width="12" height="2" fill="#bababa" rx="0" />
<rect x="593" y="81" width="18" height="2" fill="#bababa" rx="0" />
<rect x="596" y="85" width="12" height="2" fill="#bababa" rx="0" />
<rect x="593" y="89" width="18" height="2" fill="#bababa" rx="0" />
<rect x="596" y="93" width="12" height="2" fill="#bababa" rx="0" />
<rect x="505" y="133" width="18" height="2" fill="#bababa" rx="0" />
<rect x="505" y="137" width="12" height="2" fill="#bababa" rx="0" />
<rect x="505" y="141" width="18" height="2" fill="#bababa" rx="0" />
<rect x="505" y="145" width="12" height="2" fill="#bababa" rx="0" />
<rect x="549" y="133" width="18" height="2" fill="#bababa" rx="0" />
<rect x="552" y="137" width="12" height="2" fill="#bababa" rx="0" />
<rect x="549" y="141" width="18" height="2" fill="#bababa" rx="0" />
<rect x="552" y="145" width="12" height="2" fill="#bababa" rx="0" />
<rect x="593" y="133" width="18" height="2" fill="#bababa" rx="0" />
<rect x="599" y="137" width="12" height="2" fill="#bababa" rx="0" />
<rect x="593" y="141" width="18" height="2" fill="#bababa" rx="0" />
<rect x="599" y="145" width="12" height="2" fill="#bababa" rx="0" />
<rect x="637" y="133" width="18" height="2" fill="#bababa" rx="0" />
<rect x="637" y="137" width="18" height="2" fill="#bababa" rx="0" />
<rect x="637" y="141" width="18" height="2" fill="#bababa" rx="0" />
<rect x="637" y="145" width="18" height="2" fill="#bababa" rx="0" />
<text x="0" y="0" font-size="14.2" fill="#bdbdbd" transform="translate(639 91.2) rotate(-45)">ab</text>
<path d="M640.8 93.7 L656.2 78.6" fill="none" stroke="#a9d8f4" stroke-width="1.7" />
<path d="M651 78.8 H656.3 V84" fill="none" stroke="#a9d8f4" stroke-width="1.7" />
<path d="M666.25 82.05000000000001 L671 86.75 L675.75 82.05000000000001" fill="none" stroke="#c4c4c4" stroke-width="1.2" />
<text x="699.2" y="82.8" font-size="14.6" fill="#c4c4c4" letter-spacing="2.6">ab</text>
<text x="699.4" y="93" font-size="14.6" fill="#c4c4c4">c</text>
<path d="M718 85 V87.5 C718 90 716 91.2 713.5 91.2 H710" fill="none" stroke="#a9d8f4" stroke-width="1.8" />
<path d="M713 88 L709.8 91.2 L713 94.4" fill="none" stroke="#a9d8f4" stroke-width="1.8" />
<path d="M683 130 V138 M683 142 V150" fill="none" stroke="#a9d8f4" stroke-width="2" />
<path d="M679.6 132.8 L683 129.4 L686.4 132.8 M679.6 147.4 L683 150.8 L686.4 147.4" fill="none" stroke="#a9d8f4" stroke-width="1.7" />
<rect x="687" y="133" width="14" height="2" fill="#bababa" rx="0" />
<rect x="687" y="137" width="10" height="2" fill="#bababa" rx="0" />
<rect x="687" y="141" width="14" height="2" fill="#bababa" rx="0" />
<rect x="687" y="145" width="10" height="2" fill="#bababa" rx="0" />
<path d="M710.15 138.25 L715 142.75 L719.85 138.25" fill="none" stroke="#c4c4c4" stroke-width="1.2" />
<rect x="750" y="76" width="16" height="16" fill="none" stroke="#2b2b2b" stroke-width="2" rx="0" />
<rect x="783" y="65" width="38" height="38" fill="#e4e4e4" rx="5" />
<rect x="792.4" y="74.4" width="19.2" height="19.2" fill="#f2f2f2" rx="0" />
<rect x="793.6" y="75.6" width="16.8" height="16.8" fill="#ffffff" stroke="#2b2b2b" stroke-width="1.3" rx="0" />
<rect x="824" y="66" width="1" height="35" fill="#c8c8c8" rx="0" />
<rect x="838.65" y="75.65" width="16.7" height="16.7" fill="none" stroke="#2b2b2b" stroke-width="1.3" rx="0" />
<rect x="838" y="75" width="2.2" height="18" fill="#2b2b2b" rx="0" />
<rect x="882.65" y="75.65" width="16.7" height="16.7" fill="none" stroke="#2b2b2b" stroke-width="1.3" rx="0" />
<rect x="882" y="75" width="18" height="2.2" fill="#2b2b2b" rx="0" />
<rect x="926.65" y="75.65" width="16.7" height="16.7" fill="none" stroke="#2b2b2b" stroke-width="1.3" rx="0" />
<rect x="941.8" y="75" width="2.2" height="18" fill="#2b2b2b" rx="0" />
<rect x="970.65" y="75.65" width="16.7" height="16.7" fill="none" stroke="#2b2b2b" stroke-width="1.3" rx="0" />
<rect x="970" y="90.8" width="18" height="2.2" fill="#2b2b2b" rx="0" />
<rect x="751" y="133" width="16" height="16" fill="#333333" rx="0" />
<rect x="749.5" y="131.5" width="15" height="15" fill="#ffffff" stroke="#333333" stroke-width="1.2" rx="0" />
<rect x="780" y="123" width="1" height="34" fill="#c8c8c8" rx="0" />
<path d="M794.6 138.4 L801.2 131.8 L807.8 138.3 L801.1 144.6 Z" fill="#ffffff" stroke="#666666" stroke-width="1.2" />
<path d="M800.9 133.2 V130.8 C800.9 128.4 803.9 128.4 803.9 130.8 V136.6" fill="none" stroke="#8a8a8a" stroke-width="1.3" />
<path d="M806.3 134.6 C806.6 132.6 808.6 132.4 810 133 C811.6 133.8 811.6 136.5 811 138.5 C810.4 140.6 809.8 142.6 809.4 144.8 C809 142.6 808.8 140.4 809.2 137.4 C808.6 137.1 806.8 136.6 806.3 134.6 Z" fill="#1565c0" />
<path d="M822.1 137.9 L827 142.70000000000002 L831.9 137.9" fill="none" stroke="#5a5a5a" stroke-width="1.2" />
<path d="M865.6 139.3 L874 129.2 C874.8 128.3 876.4 129.4 875.6 130.4 L867.4 140.8" fill="#ffffff" stroke="#333333" stroke-width="1.1" />
<path d="M853.3 145.4 C855.6 145.5 857.2 143.8 858.6 141.6 C860.2 139 863.6 138 865.6 139.5 C867.6 141 866.6 144.2 864.2 145.3 C861.6 146.5 857 146.6 853.3 145.4 Z" fill="#85bce8" stroke="#1565c0" stroke-width="1.1" />
<rect x="854" y="147" width="21" height="3" fill="#d9000d" rx="0" />
<path d="M883.9 137.9 L888.8 142.70000000000002 L893.6999999999999 137.9" fill="none" stroke="#5a5a5a" stroke-width="1.2" />
<rect x="916.2" y="129" width="45.6" height="22" fill="none" stroke="#6b6b6b" stroke-width="2" rx="0" />
<rect x="916" y="139.2" width="46" height="2" fill="#6b6b6b" rx="0" />
<path d="M971.9 137.9 L976.8 142.70000000000002 L981.6999999999999 137.9" fill="none" stroke="#5a5a5a" stroke-width="1.2" />
<path d="M984.1 175.1 H992.8000000000001 V176.79999999999998 H985.8000000000001 V183.9 H984.1 Z" fill="#6a6a6a" />
<path d="M990.1 180.1 L992.1 180.7 H994.9 V185.7 H989.1 V182.9 L990.3000000000001 183.29999999999998 Z" fill="#6a6a6a" />
<path d="M1102.2 175.1 H1110.9 V176.79999999999998 H1103.9 V183.9 H1102.2 Z" fill="#d2d2d2" />
<path d="M1108.2 180.1 L1110.2 180.7 H1113.0 V185.7 H1107.2 V182.9 L1108.4 183.29999999999998 Z" fill="#d2d2d2" />
<path d="M1060.6 105.9 H1041.9 V68.9 H1081.9 V84.6" fill="none" stroke="#bdbdbd" stroke-width="1.7" />
<rect x="1041" y="75.1" width="41.7" height="1.7" fill="#bdbdbd" rx="0" />
<rect x="1048" y="65.1" width="1.8" height="7.5" fill="#bdbdbd" rx="0" />
<rect x="1074.1" y="65.1" width="1.8" height="7.5" fill="#bdbdbd" rx="0" />
<rect x="1054" y="89" width="3" height="2.8" fill="#bdbdbd" rx="0" />
<circle cx="1072.4" cy="96.2" r="12.5" fill="#ffffff" stroke="#a9d6f2" stroke-width="1.7"/>
<path d="M1072 88.2 V96.9 H1078.8" fill="none" stroke="#bdbdbd" stroke-width="1.7" />
<path d="M1183 89.7 V71.9 H1151.9 V97.8 H1170.3" fill="none" stroke="#2b2b2b" stroke-width="1.8" />
<path d="M1156.8 85.8 L1160.1 76.4 L1163.4 85.8 M1157.9 82.6 H1162.3" fill="none" stroke="#e53935" stroke-width="1.3" />
<rect x="1166.1" y="76.05000000000001" width="12.8" height="1.7" fill="#6b6b6b" rx="0" />
<rect x="1166.1" y="80.15" width="12.8" height="1.7" fill="#6b6b6b" rx="0" />
<rect x="1166.1" y="83.95" width="12.8" height="1.7" fill="#6b6b6b" rx="0" />
<rect x="1156.1" y="88.05000000000001" width="22.8" height="1.7" fill="#6b6b6b" rx="0" />
<rect x="1156.1" y="92.05000000000001" width="22.8" height="1.7" fill="#6b6b6b" rx="0" />
<path d="M1180.9 97.2 L1191.6 85.6 V95.4 L1185.3 101.8" fill="#ffffff" stroke="#2b2b2b" stroke-width="1.7" />
<path d="M1162 107.4 C1166.2 107.2 1168.2 104 1170.8 100.6 C1173.8 96.8 1180 96.4 1183.2 100.4 C1186.2 104.4 1184.6 110.2 1179 111.8 C1173.2 113.2 1165.2 112.4 1162 107.4 Z" fill="#85bce8" stroke="#1565c0" stroke-width="1.9" />
<rect x="1262" y="72.9" width="12" height="3" fill="#85bce8" stroke="#0f63b9" stroke-width="2" rx="0" />
<rect x="1262" y="80.1" width="12" height="3.6" fill="#85bce8" stroke="#0f63b9" stroke-width="2" rx="0" />
<path d="M1262 88.1 H1274 V93.5 H1284.3 L1268.1 109 L1251.9 93.5 H1262 Z" fill="#85bce8" stroke="#0f63b9" stroke-width="2" />
<path d="M1351.2 100.4 L1366.6 102.4 L1359 108.4 Z" fill="#f9d98c" />
<path d="M1357.8 81.3 C1354 85.5 1349 88.6 1341.4 90.6 L1358.8 109.8 L1373.4 96.9" fill="none" stroke="#e07000" stroke-width="2" />
<path d="M1348.5 97.8 L1367.2 101.8" fill="none" stroke="#e07000" stroke-width="2" />
<path d="M1357.8 81.3 L1360.8 78.4 C1362 77.3 1363.4 77.3 1364.4 78.3 L1367.8 81.6 L1375.8 73.8 C1377.4 72.3 1379.3 72.5 1380.5 73.8 C1381.8 75.2 1381.7 77 1380.2 78.4 L1372.6 86 L1375.4 88.8 C1377 90.4 1377 92.4 1375.4 94 L1373.4 96.9 Z" fill="#ffffff" stroke="#333333" stroke-width="2" />
<path d="M1437.7 98.2 L1446.7 70.8 L1455.4 95 M1441.2 88.6 H1452.4" fill="none" stroke="#2b8fd6" stroke-width="3.4" stroke-linejoin="bevel"/>
<path d="M1453.7 107.2 L1462.5 78.8 L1472.1 107.2 M1457.2 97.2 H1468.6" fill="none" stroke="#333333" stroke-width="3.4" stroke-linejoin="bevel"/>
<path d="M11.6 215 V226.6 H15.8" fill="none" stroke="#333333" stroke-width="1.3" />
<rect x="11.5" y="211.5" width="15" height="3.2" fill="#85bce8" stroke="#0a62b8" stroke-width="1.3" rx="0" />
<rect x="25.9" y="214.5" width="1.2" height="2" fill="#333333" rx="0" />
<rect x="17.7" y="221" width="14.6" height="11.3" fill="#ffffff" stroke="#333333" stroke-width="1.3" rx="0" />
<rect x="17.5" y="217.5" width="15" height="3.2" fill="#85bce8" stroke="#0a62b8" stroke-width="1.3" rx="0" />
<path d="M11.6 262 V273.6 H15.8 M11.6 265.5 H15.8 M11.6 269.5 H15.8" fill="none" stroke="#333333" stroke-width="1.2" />
<rect x="11.5" y="258.5" width="15" height="3.2" fill="#85bce8" stroke="#0a62b8" stroke-width="1.3" rx="0" />
<rect x="17.7" y="268" width="14.6" height="11.3" fill="#ffffff" stroke="#333333" stroke-width="1.3" rx="0" />
<path d="M22.4 268 V279 M27.4 268 V279 M17.7 271.6 H32.3 M17.7 275.5 H32.3" fill="none" stroke="#777777" stroke-width="1.1" />
<rect x="17.5" y="264.5" width="15" height="3.2" fill="#85bce8" stroke="#0a62b8" stroke-width="1.3" rx="0" />
<path d="M14.5 319.6 H11.6 V305.6 H27.2 V310.4" fill="none" stroke="#333333" stroke-width="1.3" />
<path d="M14.2 312.5 L15.6 308.4 L17 312.5" fill="none" stroke="#1e88e5" stroke-width="1.2" />
<path d="M19 308.5 H25 M19 310.5 H25" fill="none" stroke="#777777" stroke-width="1" />
<rect x="14" y="314" width="1.2" height="1.2" fill="#777777" rx="0" />
<rect x="14" y="316" width="1.2" height="1.2" fill="#777777" rx="0" />
<rect x="17.1" y="313" width="15" height="13" fill="#ffffff" stroke="#333333" stroke-width="1.3" rx="0" />
<path d="M19.3 319.7 L21 315.3 L22.7 319.7 M19.9 318.2 H22.1" fill="none" stroke="#1e88e5" stroke-width="1.2" />
<path d="M24.2 315.5 H30 M24.2 317.5 H30 M24.2 319.5 H30 M19 321.5 H30 M19 323.5 H30" fill="none" stroke="#777777" stroke-width="0.9" />
<path d="M17.4 367.6 L18.8 362.4 L29.3 351.9 C30.3 350.9 31.8 350.9 32.8 351.9 C33.8 352.9 33.8 354.4 32.8 355.4 L22.3 365.9 Z" fill="#ffffff" stroke="#1e88e5" stroke-width="1.2" />
<path d="M17.4 367.6 L18.8 362.4 L22.3 365.9 Z" fill="#85bce8" stroke="#1e88e5" stroke-width="1" />
<path d="M28.6 352.6 L32.1 356.1" fill="none" stroke="#1e88e5" stroke-width="1.1" />
<path d="M15 368.6 C12 368.2 10.6 370.2 11.4 372 C12.4 374 16 373.8 19 372.6 C22 371.4 24 370 26.4 370.2 C28.8 370.4 31 371.8 32.6 373.4" fill="none" stroke="#e67e22" stroke-width="1.2" />
<rect x="10.9" y="402" width="1" height="15.9" fill="#222222" rx="0" />
<rect x="12.9" y="402" width="2" height="11.9" fill="#222222" rx="0" />
<rect x="16.0" y="402" width="1" height="15.9" fill="#222222" rx="0" />
<rect x="17.9" y="402" width="1" height="11.9" fill="#222222" rx="0" />
<rect x="20.0" y="402" width="2" height="11.9" fill="#222222" rx="0" />
<rect x="23.0" y="402" width="1" height="11.9" fill="#222222" rx="0" />
<rect x="24.9" y="402" width="1" height="11.9" fill="#222222" rx="0" />
<rect x="27.0" y="402" width="2" height="11.9" fill="#222222" rx="0" />
<rect x="30.0" y="402" width="1" height="15.9" fill="#222222" rx="0" />
<rect x="32.1" y="402" width="1" height="15.9" fill="#222222" rx="0" />
<text x="13.2" y="419" font-size="5.6" font-weight="bold" fill="#222222" letter-spacing="0.35">12345</text>
<rect x="11.6" y="446.6" width="14" height="14" fill="#85bce8" stroke="#0a62b8" stroke-width="1.3" rx="0" />
<circle cx="25.5" cy="460.5" r="7" fill="#ffffff" stroke="#333333" stroke-width="1.2"/>
<rect x="11.7" y="501.8" width="6.7" height="12.4" fill="#c8c8c8" stroke="#6b6b6b" stroke-width="1.1" rx="0" />
<rect x="25.6" y="498.8" width="6.7" height="15.4" fill="#85bce8" stroke="#0a62b8" stroke-width="1.2" rx="0" />
<rect x="18.6" y="493.8" width="7" height="20.4" fill="#ffffff" stroke="#333333" stroke-width="1.2" rx="0" />
<circle cx="22" cy="550.8" r="10.2" fill="#ffffff" stroke="#333333" stroke-width="1.4"/>
<path d="M16.6 555.2 A6.8 6.8 0 0 1 21.9 544" fill="none" stroke="#1e88e5" stroke-width="2" />
<path d="M21.9 544 A6.8 6.8 0 0 1 26.4 545.8" fill="none" stroke="#c8c8c8" stroke-width="2" />
<path d="M27.2 546.6 A6.8 6.8 0 0 1 27.4 555.2" fill="none" stroke="#2b2b2b" stroke-width="2" />
<path d="M23.49 549.93 L18.50 547.08 L18.10 547.52 L21.31 552.27 A1.60 1.60 0 0 1 23.49 549.93 Z" fill="#2b2b2b" />
<circle cx="22" cy="603.8" r="10.2" fill="#85bce8"/>
<path d="M12.6 603.4 C12.8 599.4 15 596.2 18.2 594.6 C20 594.4 21.8 594.8 23.4 595 C22.4 596.2 21 597 19.6 598 C18.2 599 17 600 16.2 601.2 C15.6 602.2 15.8 603.6 16.4 605 C15 605.2 13.6 604.6 12.6 603.4 Z" fill="#ffffff" />
<path d="M17 608.2 C19.2 607.2 23.2 607.6 25.8 609.4 C26.6 610.2 25.4 612.6 23.6 613.6 C21.8 614.4 19.6 614.2 18.6 613.2 C17.6 612 16.6 609.6 17 608.2 Z" fill="#ffffff" />
<path d="M31.4 602.4 C32 603.6 32 605 31.6 606 C31 605 30.8 603.6 31.4 602.4 Z" fill="#ffffff" />
<circle cx="22" cy="603.8" r="10.2" fill="none" stroke="#0a62b8" stroke-width="1.4"/>
<path d="M11.6 657 V639.6 H28.6 L32.3 643.3 V657" fill="none" stroke="#333333" stroke-width="1.2" />
<path d="M11.6 656.8 Q13.67 659.1999999999999 15.74 656.8 Q17.81 659.1999999999999 19.88 656.8 Q21.95 659.1999999999999 24.02 656.8 Q26.09 659.1999999999999 28.16 656.8 Q30.23 659.1999999999999 32.30 656.8" fill="none" stroke="#333333" stroke-width="1.1" />
<path d="M28.6 639.6 V643.3 H32.3" fill="#ffffff" stroke="#333333" stroke-width="1" />
<rect x="14.6" y="642.3" width="14.6" height="3" fill="#c8c8c8" stroke="#666666" stroke-width="1" rx="0" />
<path d="M11.6 679 V696.4 H32.3 V679" fill="none" stroke="#333333" stroke-width="1.2" />
<path d="M11.6 679.2 Q13.67 676.8000000000001 15.74 679.2 Q17.81 676.8000000000001 19.88 679.2 Q21.95 676.8000000000001 24.02 679.2 Q26.09 676.8000000000001 28.16 679.2 Q30.23 676.8000000000001 32.30 679.2" fill="none" stroke="#333333" stroke-width="1.1" />
<rect x="14.6" y="690.3" width="14.6" height="3" fill="#c8c8c8" stroke="#666666" stroke-width="1" rx="0" />
<rect x="11.6" y="715.9" width="20.8" height="18.6" fill="#ffffff" stroke="#333333" stroke-width="1.2" rx="0" />
<rect x="11.6" y="715.9" width="20.8" height="3.6" fill="#f9d98c" stroke="#e07000" stroke-width="1.3" rx="0" />
<path d="M14.6 727.5 L16.5 721.5 L18.4 727.5 M15.2 725.5 H17.8" fill="none" stroke="#1e88e5" stroke-width="1.1" />
<rect x="21" y="721.1" width="9" height="0.9" fill="#666666" rx="0" />
<rect x="21" y="723.1" width="9" height="0.9" fill="#666666" rx="0" />
<rect x="21" y="725.1" width="9" height="0.9" fill="#666666" rx="0" />
<rect x="21" y="727.1" width="9" height="0.9" fill="#666666" rx="0" />
<rect x="14.2" y="729.1" width="15.8" height="0.9" fill="#666666" rx="0" />
<rect x="14.2" y="731.1" width="15.8" height="0.9" fill="#666666" rx="0" />
<rect x="11.6" y="753.8000000000001" width="20.8" height="18.6" fill="#ffffff" stroke="#333333" stroke-width="1.2" rx="0" />
<rect x="11.6" y="768.6" width="20.8" height="3.6" fill="#f9d98c" stroke="#e07000" stroke-width="1.3" rx="0" />
<path d="M14.6 762.4 L16.5 756.4 L18.4 762.4 M15.2 760.4 H17.8" fill="none" stroke="#1e88e5" stroke-width="1.1" />
<rect x="21" y="756.0" width="9" height="0.9" fill="#666666" rx="0" />
<rect x="21" y="758.0" width="9" height="0.9" fill="#666666" rx="0" />
<rect x="21" y="760.0" width="9" height="0.9" fill="#666666" rx="0" />
<rect x="21" y="762.0" width="9" height="0.9" fill="#666666" rx="0" />
<rect x="14.2" y="764.0" width="15.8" height="0.9" fill="#666666" rx="0" />
<rect x="14.2" y="766.0" width="15.8" height="0.9" fill="#666666" rx="0" />
<path d="M20.4 239.4 L24.8 244 L20.4 248.6" fill="none" stroke="#555555" stroke-width="1.3" />
<path d="M20.4 286.4 L24.8 291 L20.4 295.6" fill="none" stroke="#555555" stroke-width="1.3" />
<path d="M20.4 333.4 L24.8 338 L20.4 342.6" fill="none" stroke="#555555" stroke-width="1.3" />
<path d="M20.4 380.4 L24.8 385 L20.4 389.6" fill="none" stroke="#555555" stroke-width="1.3" />
<path d="M20.4 427.4 L24.8 432 L20.4 436.6" fill="none" stroke="#555555" stroke-width="1.3" />
<path d="M20.4 474.4 L24.8 479 L20.4 483.6" fill="none" stroke="#555555" stroke-width="1.3" />
<path d="M20.4 521.4 L24.8 526 L20.4 530.6" fill="none" stroke="#555555" stroke-width="1.3" />
<path d="M20.4 568.9 L24.8 573.5 L20.4 578.1" fill="none" stroke="#555555" stroke-width="1.3" />
<rect x="572.9" y="211.9" width="6" height="8.8" fill="none" stroke="#707070" stroke-width="1.4" rx="0" />
<rect x="576.6" y="212" width="2.4" height="8.6" fill="#707070" rx="0" />
<rect x="570.4" y="220.4" width="10.6" height="1.5" fill="#707070" rx="0" />
<rect x="575" y="221.5" width="1.3" height="6.3" fill="#707070" rx="0" />
<path d="M326 280.5 H321.8 V263.8 H340.2 V266" fill="none" stroke="#c2c2c2" stroke-width="1.2" />
<rect x="321.8" y="263.6" width="18.6" height="3.2" fill="#a9d5f2" rx="0" />
<path d="M340.2 275.2 V280.5 H335" fill="none" stroke="#c2c2c2" stroke-width="1.2" />
<path d="M327.2 282.6 L328.4 277.6 L338.6 267.4 C339.6 266.4 341 266.4 342 267.4 C343 268.4 343 269.8 342 270.8 L331.8 281 Z" fill="#ffffff" stroke="#a9d5f2" stroke-width="1.2" />
<path d="M367.59 267.08 L388.10 282.93 L388.70 282.27 L370.81 263.52 A2.40 2.40 0 0 1 367.59 267.08 Z" fill="#e8302f" />
<path d="M371.08 282.11 L388.90 263.94 L388.30 263.26 L367.92 278.49 A2.40 2.40 0 0 1 371.08 282.11 Z" fill="#e8302f" />
<path d="M423 262.8 L432.6 272.5 H427.4 V283.2 H418.6 V272.5 H413.4 Z" fill="#dcecfa" stroke="#a9d5f2" stroke-width="1.1" />
<path d="M464.6 262.6 H473.2 V273.4 H478.6 L469 283 L459.2 273.4 H464.6 Z" fill="#dcecfa" stroke="#a9d5f2" stroke-width="1.1" />
<path d="M520.50 270.95 L524.80 270.95 L524.80 274.85 L520.50 274.85 Z M519.95 276.19 L522.99 279.23 L520.23 281.99 L517.19 278.95 Z M515.85 279.50 L515.85 283.80 L511.95 283.80 L511.95 279.50 Z M510.61 278.95 L507.57 281.99 L504.81 279.23 L507.85 276.19 Z M507.30 274.85 L503.00 274.85 L503.00 270.95 L507.30 270.95 Z M507.85 269.61 L504.81 266.57 L507.57 263.81 L510.61 266.85 Z M511.95 266.30 L511.95 262.00 L515.85 262.00 L515.85 266.30 Z M517.19 266.85 L520.23 263.81 L522.99 266.57 L519.95 269.61 Z " fill="#2a8ad4" />
<circle cx="513.9" cy="272.9" r="6.30" fill="none" stroke="#2a8ad4" stroke-width="2.60"/>
<path d="M535.1 271.35 L540 275.65 L544.9 271.35" fill="none" stroke="#555555" stroke-width="1.3" />
<circle cx="570.5" cy="317.3" r="7.8" fill="none" stroke="#333333" stroke-width="1.2"/>
<path d="M564.6 322.8 L559.2 328.4" fill="none" stroke="#333333" stroke-width="3.2" stroke-linecap="round"/>
<rect x="65" y="370" width="12" height="12" fill="#ffffff" stroke="#5f84b4" stroke-width="2" rx="0" />
<rect x="67.9" y="375.05" width="6" height="1.9" fill="#2a2a2a" rx="0" />
<rect x="69.95" y="373" width="1.9" height="6" fill="#2a2a2a" rx="0" />
<rect x="65" y="428" width="12" height="12" fill="#ffffff" stroke="#5f84b4" stroke-width="2" rx="0" />
<rect x="67.9" y="433.05" width="6" height="1.9" fill="#2a2a2a" rx="0" />
<rect x="69.95" y="431" width="1.9" height="6" fill="#2a2a2a" rx="0" />
<rect x="65" y="457" width="12" height="12" fill="#ffffff" stroke="#5f84b4" stroke-width="2" rx="0" />
<rect x="67.9" y="462.05" width="6" height="1.9" fill="#2a2a2a" rx="0" />
<rect x="69.95" y="460" width="1.9" height="6" fill="#2a2a2a" rx="0" />
<rect x="89.6" y="366.6" width="20.8" height="18.6" fill="#ffffff" stroke="#333333" stroke-width="1.3" rx="0" />
<rect x="89.6" y="366.6" width="20.8" height="4.2" fill="#85bce8" stroke="#0a62b8" stroke-width="1.3" rx="0" />
<rect x="93" y="373.9" width="3.6" height="1.1" fill="#777777" rx="0" />
<rect x="98" y="373.9" width="3.6" height="1.1" fill="#777777" rx="0" />
<rect x="103" y="373.9" width="3.6" height="1.1" fill="#777777" rx="0" />
<rect x="93" y="377.0" width="3.6" height="1.1" fill="#777777" rx="0" />
<rect x="98" y="377.0" width="3.6" height="1.1" fill="#777777" rx="0" />
<rect x="103" y="377.0" width="3.6" height="1.1" fill="#777777" rx="0" />
<rect x="93" y="380.0" width="3.6" height="1.1" fill="#777777" rx="0" />
<rect x="98" y="380.0" width="3.6" height="1.1" fill="#777777" rx="0" />
<rect x="103" y="380.0" width="3.6" height="1.1" fill="#777777" rx="0" />
<rect x="90.6" y="399.6" width="19.8" height="10.6" fill="#ffffff" stroke="#333333" stroke-width="1.2" rx="0" />
<rect x="90.6" y="399.5" width="2.2" height="10.8" fill="#85bce8" stroke="#0a62b8" stroke-width="1" rx="0" />
<path d="M95.6 402 V405.5 C95.6 406.6 96.4 407.8 97 407.8 C97.6 407.8 98.4 406.6 98.4 405.5 V402" fill="none" stroke="#2a8ad4" stroke-width="1.15" />
<path d="M100.6 408.1 V403.6 C100.6 402.6 101.2 402 102.05 402 C102.9 402 103.5 402.6 103.5 403.6 V408.1 M100.6 405.2 H103.5" fill="none" stroke="#2a8ad4" stroke-width="1.15" />
<path d="M105.6 408.1 V402 H107.4 C108.3 402 108.8 402.7 108.8 403.6 C108.8 404.5 108.3 405.2 107.4 405.2 H105.6 M107.6 405.2 C108.5 405.6 108.8 406.3 108.8 408.1" fill="none" stroke="#2a8ad4" stroke-width="1.15" />
<rect x="89.7" y="428.5" width="20.6" height="10.8" fill="#ffffff" stroke="#333333" stroke-width="1.2" rx="0" />
<rect x="89.7" y="428.5" width="2.3" height="10.8" fill="#85bce8" stroke="#0a62b8" stroke-width="1" rx="0" />
<path d="M98.9 431.8 H95.5 L97.5 434.1 L95.5 436.4 H98.9" fill="none" stroke="#2a8ad4" stroke-width="1.2" />
<path d="M102.8 431.2 V437.1 M105.6 431.2 V437.1 M101.2 433.1 H107.1 M101.2 435.3 H107.1" fill="none" stroke="#2a8ad4" stroke-width="1.1" />
<path d="M102.6 456.6 C101.6 454.8 99.4 455.2 98.7 458.2 L96.5 467.4 C95.9 469.9 94.2 471 92.3 470.1" fill="none" stroke="#333333" stroke-width="1.25" />
<path d="M95.3 459.9 H101.8" fill="none" stroke="#b0b0b0" stroke-width="1.2" />
<path d="M99.2 460 C100.8 459.3 101.9 460 102.9 462.4 C103.9 465 105 466.8 106.8 466.6" fill="none" stroke="#333333" stroke-width="1.2" />
<path d="M108.2 460.1 C106.4 460.4 104.8 461.8 102.8 464.4 C101.7 465.8 100.7 466.6 99.4 466.3" fill="none" stroke="#333333" stroke-width="1.1" />
<path d="M95.8 486 V481.6 H105.6 L110.3 486.3 V502 H95.8 V497" fill="#ffffff" stroke="#333333" stroke-width="1.2" />
<path d="M105.6 481.6 V486.3 H110.3" fill="none" stroke="#333333" stroke-width="1" />
<rect x="89.7" y="486.7" width="7.4" height="9.6" fill="#ffffff" stroke="#333333" stroke-width="1.1" rx="0" />
<rect x="91.6" y="488.8" width="3.8" height="0.9" fill="#666666" rx="0" />
<rect x="91.6" y="491.0" width="3.8" height="0.9" fill="#666666" rx="0" />
<rect x="91.6" y="493.20000000000005" width="3.8" height="0.9" fill="#666666" rx="0" />
<path d="M640.7 208.7 H650.3 L655.3 213.9 V229.1 H640.7 Z" fill="#ffffff" stroke="#333333" stroke-width="1.4" />
<path d="M650.3 208.7 V213.9 H655.3" fill="none" stroke="#333333" stroke-width="1.3" />
<rect x="763.1" y="210.1" width="3.7" height="17.6" fill="#3c3c3c" rx="0" />
<rect x="756.1" y="217.1" width="17.7" height="3.6" fill="#3c3c3c" rx="0" />
<rect x="1998.8" y="832.8" width="1.2" height="1.2" fill="#000000" rx="0" />
</svg>
</body></html>
